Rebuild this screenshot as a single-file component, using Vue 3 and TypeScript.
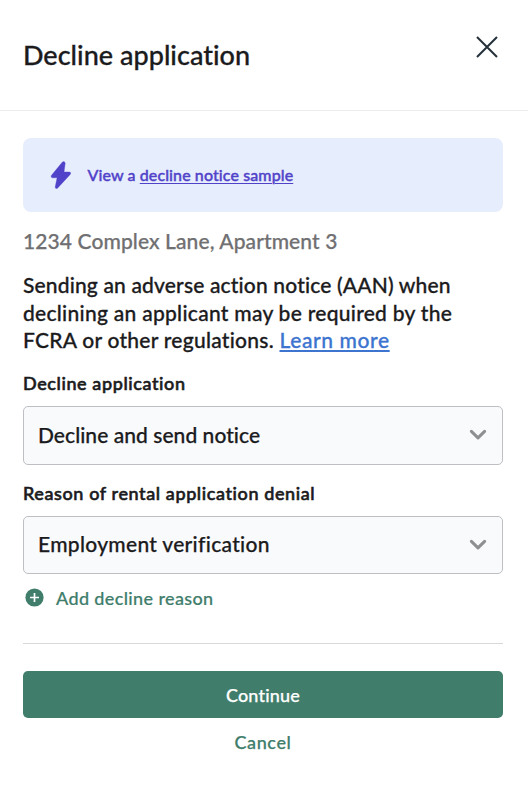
<script setup lang="ts">
import { ref } from 'vue'

interface Field {
  id: string
  label: string
  value: string
}

const fields = ref<Field[]>([
  { id: 'action', label: 'Decline application', value: 'Decline and send notice' },
  { id: 'reason', label: 'Reason of rental application denial', value: 'Employment verification' },
])
</script>

<template>
  <main class="modal">
    <header class="head">
      <h1>Decline application</h1>
      <button class="close" aria-label="Close">
        <svg width="24" height="24" viewBox="0 0 24 24">
          <path d="M2 2 22 22M22 2 2 22" fill="none" stroke="#24303a" stroke-width="2" />
        </svg>
      </button>
    </header>
    <div class="body">
      <div class="notice">
        <svg class="bolt" width="22" height="30" viewBox="0 0 22 30">
          <path d="M12.4 2.1 1.3 15.6Q.5 17.5 2.3 17.8H7.1L5.2 27Q5.3 29.2 7.5 28.2L20.2 14.4Q21.5 12.3 19.4 12H14L15.2 3.2Q14.6.5 12.4 2.1Z" fill="#5143c9" stroke="#5143c9" stroke-width=".4" />
        </svg>
        <p class="notice-text">View a <a class="sample">decline notice sample</a></p>
      </div>
      <p class="address">1234 Complex Lane, Apartment 3</p>
      <p class="copy">
        <span class="line1">Sending an adverse action notice (AAN) when</span><br />
        <span class="line2">declining an applicant may be required by the</span><br />
        <span class="line3">FCRA or other regulations. </span><a class="learn">Learn more</a>
      </p>
      <div v-for="f in fields" :key="f.id" class="field" :class="f.id">
        <div class="label">{{ f.label }}</div>
        <div class="select">
          <span class="value">{{ f.value }}</span>
          <svg width="18" height="12" viewBox="0 0 18 12">
            <path d="M2.4 2.4 9 8.8l6.6-6.4" fill="none" stroke="#8e8f91" stroke-width="3.1" stroke-linecap="round" stroke-linejoin="round" />
          </svg>
        </div>
      </div>
      <button class="add">
        <svg width="19" height="19" viewBox="0 0 19 19">
          <circle cx="9.5" cy="9.5" r="9.1" fill="#407d6b" />
          <path d="M9.5 5v9M5 9.5h9" stroke="#fff" stroke-width="1.7" />
        </svg>
        <span>Add decline reason</span>
      </button>
      <footer class="foot">
        <button class="primary">Continue</button>
        <button class="cancel">Cancel</button>
      </footer>
    </div>
  </main>
</template>

<style>
body {
  background: #fff;
}
</style>

<style scoped>
.modal {
  height: 796px;
  box-sizing: border-box;
  background: #fff;
  color: #1b1b1d;
  font-family: Lato, 'Liberation Sans', sans-serif;
  font-weight: 500;
  font-variant-ligatures: none;
  white-space: nowrap;
  overflow: hidden;
}
h1, p {
  margin: 0;
  font-weight: 500;
}
button {
  padding: 0;
  border: 0;
  background: none;
  font: inherit;
  font-variant-ligatures: none;
  color: inherit;
}
svg {
  display: block;
  flex: none;
}
.head {
  display: flex;
  justify-content: space-between;
  height: 111px;
  box-sizing: border-box;
  padding: 35px 29px 0 23px;
  border-bottom: 1px solid #ececee;
}
h1 {
  height: 40px;
  font-size: 27px;
  line-height: 39px;
  letter-spacing: 0.02px;
  -webkit-text-stroke: 0.3px currentColor;
}
.close {
  width: 24px;
  height: 24px;
}
.body {
  padding: 27px 25px 0 23px;
}
.notice {
  display: flex;
  align-items: center;
  height: 74px;
  border-radius: 8px;
  background: #e6edfd;
  color: #5143c9;
  padding-left: 27px;
  box-sizing: border-box;
}
.notice-text {
  margin-left: 15.5px;
  font-size: 16px;
  line-height: 24px;
  letter-spacing: 0.1px;
  -webkit-text-stroke: 0.4px currentColor;
}
.sample {
  text-decoration: underline 1px;
  text-underline-offset: 2px;
}
.address {
  margin-top: 15px;
  color: #707072;
  font-size: 21px;
  line-height: 28px;
  letter-spacing: 0.1px;
  -webkit-text-stroke: 0.25px currentColor;
}
.copy {
  margin-top: 16px;
  font-size: 21px;
  line-height: 27.5px;
  -webkit-text-stroke: 0.3px currentColor;
}
.line1 {
  letter-spacing: 0.16px;
}
.line2 {
  letter-spacing: 0.28px;
}
.line3 {
  letter-spacing: 0.26px;
}
.learn {
  color: #3c74d0;
  letter-spacing: 0.6px;
  text-decoration: underline 2px;
  text-underline-offset: 2px;
}
.field {
  display: flex;
  flex-direction: column;
}
.label {
  height: 24px;
  font-size: 18px;
  line-height: 24px;
  letter-spacing: 0.6px;
  -webkit-text-stroke: 0.6px currentColor;
}
.action {
  margin-top: 17px;
}
.reason {
  margin-top: 16px;
}
.select {
  display: flex;
  align-items: center;
  justify-content: space-between;
  box-sizing: border-box;
  height: 59px;
  margin-top: 11px;
  padding: 0 15px 0 14px;
  border: 1px solid #bebfc2;
  border-radius: 5px;
  background: #f9fafc;
  font-size: 21px;
  -webkit-text-stroke: 0.25px currentColor;
}
.value {
  padding-bottom: 1px;
  letter-spacing: 0.05px;
}
.reason .value {
  padding-bottom: 2px;
  letter-spacing: 0.3px;
}
.reason .select {
  height: 58px;
}
.add {
  display: flex;
  align-items: center;
  height: 24px;
  margin: 12px 0 0 2px;
  color: #407d6b;
  font-size: 18px;
  letter-spacing: 0.37px;
  gap: 12px;
  -webkit-text-stroke: 0.2px currentColor;
}
.foot {
  display: flex;
  flex-direction: column;
  margin-top: 33px;
  padding-top: 27px;
  border-top: 1px solid #d8d8da;
}
.primary {
  height: 47px;
  padding-top: 1px;
  border-radius: 5px;
  background: #407d6b;
  color: #fff;
  font-size: 18px;
  line-height: 46px;
  letter-spacing: 0.2px;
  -webkit-text-stroke: 0.25px currentColor;
}
.cancel {
  height: 24px;
  margin-top: 12px;
  color: #407d6b;
  font-size: 18px;
  line-height: 24px;
  letter-spacing: 0.6px;
  -webkit-text-stroke: 0.25px currentColor;
}
</style>
